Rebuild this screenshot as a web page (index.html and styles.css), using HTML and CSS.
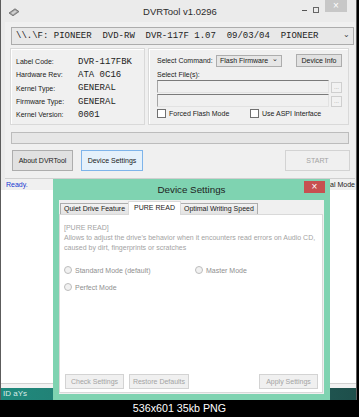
FILE: index.html
```html
<!DOCTYPE html>
<html>
    <head>
        <meta charset="utf-8">
        <title>DVRTool v1.0296</title>
        <link rel="stylesheet" href="styles.css">
    </head>
    <body>
        <div class="shot">
            <div class="window">
                <div class="titlebar">
                    <svg class="appicon" width="12" height="9" viewBox="0 0 12 9">
                        <path d="M1 5 L7 0.8 L11 3.6 L5 7.8 Z" fill="#9a9a9a" stroke="#6a6a6a" stroke-width="0.8"/>
                        <path d="M3 5 L7 2.2 L9 3.6 L5 6.4 Z" fill="#d0d0d0"/>
                    </svg>
                    <span class="title">DVRTool v1.0296</span>
                    <div class="controls">
                        <span class="ctl-min"></span>
                        <span class="ctl-max"></span>
                        <span class="ctl-close">&#215;</span>
                    </div>
                </div>
                <div class="client">
                    <div class="devbar">
                        <span class="devtext">\\.\F: PIONEER  DVD-RW  DVR-117F 1.07  09/03/04  PIONEER</span>
                        <span class="arrow">&#8964;</span>
                    </div>
                    <div class="groups">
                        <div class="group info">
                            <span>Label Code:</span><span class="mono">DVR-117FBK</span>
                            <span>Hardware Rev:</span><span class="mono">ATA 0C16</span>
                            <span>Kernel Type:</span><span class="mono">GENERAL</span>
                            <span>Firmware Type:</span><span class="mono">GENERAL</span>
                            <span>Kernel Version:</span><span class="mono">0001</span>
                        </div>
                        <div class="group cmd">
                            <div class="cmdrow">
                                <span class="cmdlabel">Select Command:</span>
                                <span class="select">Flash Firmware<span class="sel-arrow">&#8964;</span></span>
                                <span class="btn devinfo">Device Info</span>
                            </div>
                            <div class="fileslabel">Select File(s):</div>
                            <div class="filerow">
                                <span class="field"></span>
                                <span class="browse">...</span>
                            </div>
                            <div class="filerow">
                                <span class="field"></span>
                                <span class="browse">...</span>
                            </div>
                            <div class="checks">
                                <span class="check first"><span class="box"></span>Forced Flash Mode</span>
                                <span class="check"><span class="box"></span>Use ASPI Interface</span>
                            </div>
                        </div>
                    </div>
                    <div class="progress"></div>
                    <div class="actions">
                        <span class="btn about">About DVRTool</span>
                        <span class="btn focus settings">Device Settings</span>
                        <span class="btn off start">START</span>
                    </div>
                    <div class="status">
                        <span class="ready">Ready.</span>
                        <span class="mode">Normal Mode</span>
                    </div>
                </div>
            </div>
            <div class="desk"><span class="desklabel">ID aYs</span></div>
            <div class="dialog">
                <div class="dlg-title">
                    <span></span>
                    <span class="dlg-name">Device Settings</span>
                    <span class="dlg-close">&#215;</span>
                </div>
                <div class="dlg-client">
                    <div class="tabs">
                        <span class="tab">Quiet Drive Feature</span>
                        <span class="tab active">PURE READ</span>
                        <span class="tab">Optimal Writing Speed</span>
                    </div>
                    <div class="panel">
                        <div class="line">[PURE READ]</div>
                        <div class="line">Allows to adjust the drive's behavior when it encounters read errors on Audio CD,</div>
                        <div class="line">caused by dirt, fingerprints or scratches</div>
                        <div class="radios">
                            <span class="radio wide"><span class="dot"></span>Standard Mode (default)</span>
                            <span class="radio"><span class="dot"></span>Master Mode</span>
                        </div>
                        <div class="radios second">
                            <span class="radio"><span class="dot"></span>Perfect Mode</span>
                        </div>
                        <div class="dlg-buttons">
                            <span class="btn off check-btn">Check Settings</span>
                            <span class="btn off restore">Restore Defaults</span>
                            <span class="btn off apply">Apply Settings</span>
                        </div>
                    </div>
                </div>
            </div>
        </div>
        <div class="caption">536x601 35kb PNG</div>
    </body>
</html>
```

FILE: styles.css
```css
*{
    box-sizing: border-box;
}
body{
    margin: 0;
    width: 359px;
    height: 417px;
    overflow: hidden;
    background-color: #000;
    font-family: "Liberation Sans", Arial, sans-serif;
    font-size: 7px;
    color: #1a1a1a;
}
.shot{
    position: relative;
    width: 357px;
    height: 400px;
    overflow: hidden;
    background-color: #fff;
    border-left: 1px solid #5c5c5c;
    border-right: 1px solid #5c5c5c;
}
.window{
    height: 190px;
    background-color: #ebebeb;
    padding: 0 1px 0 4px;
}
.titlebar{
    height: 22px;
    display: grid;
    grid-template-columns: 1fr auto 1fr;
    align-items: center;
}
.appicon{
    margin-left: 3px;
    margin-top: 3px;
}
.title{
    font-size: 9.5px;
    color: #2b2b2b;
}
.controls{
    justify-self: end;
    align-self: start;
    display: flex;
    align-items: flex-start;
}
.ctl-min{
    width: 5px;
    height: 1px;
    margin-top: 10px;
    background-color: #555;
}
.ctl-max{
    width: 6px;
    height: 6px;
    margin-top: 7px;
    margin-left: 6px;
    border: 1px solid #666;
}
.ctl-close{
    width: 22px;
    height: 12px;
    margin-left: 6px;
    margin-right: 8px;
    background-color: #c7c7c7;
    color: #fff;
    font-size: 10px;
    line-height: 12px;
    text-align: center;
}
.client{
    height: 168px;
    background-color: #f0f0f0;
    display: flex;
    flex-direction: column;
}
.devbar{
    margin: 5px 1px 0 6px;
    height: 18px;
    background-color: #e8e8e8;
    border: 1px solid #acacac;
    display: flex;
    align-items: center;
    padding-left: 4px;
}
.devtext{
    font-family: "Liberation Mono", "Courier New", monospace;
    font-size: 9px;
    white-space: pre;
    color: #222;
}
.arrow{
    margin-left: auto;
    margin-right: 3px;
    margin-top: -4px;
    font-size: 8px;
    color: #444;
}
.groups{
    margin: 3px 0 0 5px;
    height: 77px;
    display: flex;
    gap: 3px;
}
.group{
    border: 1px solid #d9d9d9;
    box-shadow: inset 1px 1px 0 #fff;
}
.info{
    width: 135px;
    padding: 6px 0 0 5px;
    display: grid;
    grid-template-columns: 62px auto;
    grid-auto-rows: 13.3px;
    align-items: center;
    align-content: start;
}
.mono{
    font-family: "Liberation Mono", "Courier New", monospace;
    font-size: 9px;
    color: #222;
}
.cmd{
    width: 201px;
    padding: 5px 0 0 8px;
}
.cmdrow{
    height: 13px;
    display: flex;
    align-items: center;
}
.cmdlabel{
    width: 59px;
}
.select{
    width: 66px;
    height: 12px;
    border: 1px solid #adadad;
    background-color: #e6e6e6;
    display: flex;
    align-items: center;
    padding-left: 3px;
}
.sel-arrow{
    margin-left: auto;
    margin-right: 3px;
    margin-top: -4px;
    font-size: 7px;
}
.btn{
    display: flex;
    align-items: center;
    justify-content: center;
    border: 1px solid #adadad;
    background-color: #e1e1e1;
    white-space: nowrap;
}
.devinfo{
    width: 46px;
    height: 13px;
    margin-left: 14px;
}
.fileslabel{
    margin-top: 3px;
    line-height: 9px;
}
.filerow{
    margin-top: 1px;
    height: 13px;
    display: flex;
    align-items: flex-end;
}
.field{
    width: 172px;
    height: 13px;
    background-color: #f0f0f0;
    border-top: 1px solid #7a7a7a;
    border-left: 1px solid #a5a5a5;
    border-right: 1px solid #e2e2e2;
    border-bottom: 1px solid #e2e2e2;
}
.browse{
    width: 11px;
    height: 11px;
    margin-left: 2px;
    border: 1px solid #cfcfcf;
    background-color: #f2f2f2;
    color: #9a9a9a;
    font-size: 6px;
    text-align: center;
    line-height: 8px;
}
.checks{
    margin-top: 2px;
    height: 9px;
    display: flex;
    align-items: center;
}
.check{
    display: flex;
    align-items: center;
}
.check.first{
    width: 93px;
}
.box{
    width: 9px;
    height: 9px;
    margin-right: 3px;
    border: 1px solid #707070;
    background-color: #fff;
}
.progress{
    margin: 7px 0 0 6px;
    width: 338px;
    height: 12px;
    border: 1px solid #bcbcbc;
    background-color: #e6e6e6;
}
.actions{
    margin-top: 6px;
    height: 21px;
    padding-left: 7px;
    display: flex;
    gap: 8px;
}
.about{
    width: 61px;
}
.settings{
    width: 62px;
}
.focus{
    border-color: #7eb4ea;
    background-color: #e5f1fb;
}
.off{
    border-color: #d3d3d3;
    background-color: #f0f0f0;
    color: #a3a3a3;
}
.start{
    width: 65px;
    margin-left: auto;
    margin-right: 5px;
}
.status{
    margin-top: 7px;
    height: 12px;
    display: flex;
    border-top: 1px solid #d0d0d0;
}
.ready{
    flex: 1;
    padding-left: 1px;
    color: #2038d0;
    line-height: 11px;
}
.mode{
    width: 46px;
    border-left: 1px solid #c4c4c4;
    padding-left: 3px;
    line-height: 11px;
    white-space: nowrap;
}
.desk{
    position: absolute;
    left: 0;
    right: 0;
    bottom: 0;
    height: 17px;
    border-top: 1px solid #d2d2d2;
    background: linear-gradient(#f2f2f2 0 4px, transparent 4px),
        linear-gradient(90deg, #1f8a7d, #26756c 40%, #1e4f4b);
    color: #d9ece9;
    padding: 5px 0 0 2px;
    font-size: 8px;
    line-height: 10px;
}
.dialog{
    position: absolute;
    left: 52px;
    top: 179px;
    width: 277px;
    height: 221px;
    padding: 0 6px;
    background-color: #7fd3b1;
}
.dlg-title{
    height: 21px;
    display: grid;
    grid-template-columns: 1fr auto 1fr;
    align-items: center;
}
.dlg-name{
    font-size: 9.8px;
    color: #1e1e1e;
}
.dlg-close{
    justify-self: end;
    align-self: start;
    margin-top: 2px;
    margin-right: -1px;
    width: 21px;
    height: 12px;
    background-color: #c75050;
    color: #fff;
    font-size: 10px;
    line-height: 12px;
    text-align: center;
}
.dlg-client{
    height: 194px;
    background-color: #f0f0f0;
    padding: 0 1px 1px 0;
    display: flex;
    flex-direction: column;
}
.tabs{
    height: 14px;
    padding-left: 1px;
    display: flex;
    align-items: flex-end;
}
.tab{
    height: 11px;
    padding: 0 3px;
    border: 1px solid #adadad;
    border-bottom: none;
    background: linear-gradient(#f2f2f2, #e3e3e3);
    line-height: 10px;
    white-space: nowrap;
}
.tab.active{
    position: relative;
    height: 14px;
    margin-bottom: -1px;
    margin-left: -1px;
    margin-right: -1px;
    padding: 0 5px;
    background: #fff;
    border-color: #d9d9d9;
    line-height: 12px;
}
.panel{
    flex: 1;
    background-color: #fff;
    border: 1px solid #d9d9d9;
    padding: 8px 4px 3px 4px;
    display: flex;
    flex-direction: column;
    color: #a3a3a3;
}
.line{
    line-height: 10px;
    white-space: nowrap;
}
.radios{
    margin-top: 12px;
    height: 10px;
    display: flex;
    align-items: center;
    color: #8f8f8f;
}
.radios.second{
    margin-top: 7px;
}
.radio{
    display: flex;
    align-items: center;
}
.radio.wide{
    width: 131px;
}
.dot{
    width: 8px;
    height: 8px;
    margin-right: 3px;
    border-radius: 50%;
    border: 1px solid #bdbdbd;
    background-color: #f1f1f1;
}
.dlg-buttons{
    margin-top: auto;
    height: 15px;
    padding-left: 1px;
    display: flex;
    gap: 5px;
}
.check-btn{
    width: 59px;
}
.restore{
    width: 60px;
}
.apply{
    width: 59px;
    margin-left: auto;
}
.caption{
    height: 17px;
    color: #fff;
    font-size: 10.7px;
    line-height: 17px;
    text-align: center;
}
```
